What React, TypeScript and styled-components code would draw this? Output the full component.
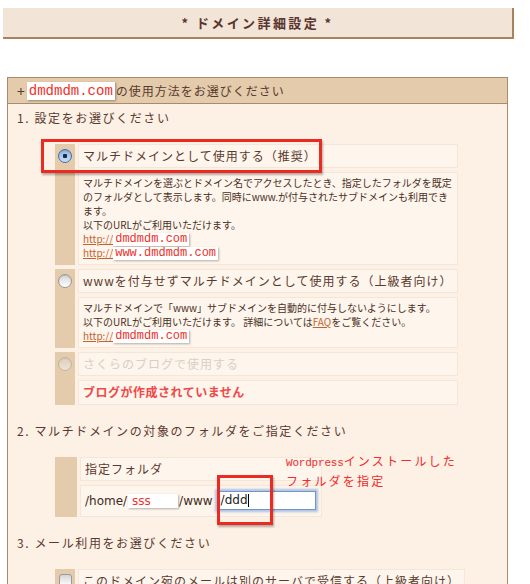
import styled, { createGlobalStyle } from "styled-components";

const GlobalStyle = createGlobalStyle`
  * { box-sizing: border-box; }
  body {
    margin: 0;
    background: #fff;
    font-family: "Noto Sans CJK JP", sans-serif;
    color: #5a3a2e;
  }
`;

const Page = styled.div`
  padding: 8px 0 0 3px;
  width: 530px;
  height: 584px;
  overflow: hidden;
`;

const TitleBar = styled.div`
  width: 511px;
  height: 31px;
  background: #f2e4d6;
  border-right: 2px solid #a8835f;
  border-bottom: 2px solid #a8835f;
  display: flex;
  align-items: center;
  justify-content: center;
  font-size: 13px;
  font-weight: 700;
  letter-spacing: 2.4px;
  color: #5a3630;
`;

const Panel = styled.div`
  position: relative;
  margin: 38px 0 0 4px;
  width: 501px;
  border: 1px solid #a88a6c;
  border-bottom: none;
  background: #fdf0e5;
  padding-bottom: 40px;
`;

const PanelHead = styled.div`
  height: 26px;
  background: #e3cbab;
  border-bottom: 1px solid #a88a6c;
  display: flex;
  align-items: center;
  padding-left: 9px;
  font-size: 12px;
  letter-spacing: 1px;
`;

const Plus = styled.span`
  font-size: 14px;
  letter-spacing: 0;
`;

const DomainTag = styled.span`
  display: inline-block;
  margin: 0 1px 0 2px;
  padding: 0 2px;
  height: 18px;
  line-height: 18px;
  background: #fff;
  color: #f0302a;
  font-family: "Liberation Mono", monospace;
  font-size: 14px;
  letter-spacing: 0;
  box-shadow: 1px 1px 2px rgba(0, 0, 0, 0.35);
`;

const SectionTitle = styled.div`
  padding: 6px 0 0 9px;
  height: 22px;
  line-height: 16px;
  font-size: 12px;
  letter-spacing: 1.6px;
`;

const Table = styled.table`
  margin: 14px 0 8px 44px;
  border-collapse: separate;
  border-spacing: 3px 4px;
`;

const TanCell = styled.td<{ $w?: number }>`
  width: ${(p) => p.$w ?? 20}px;
  background: #e3cbab;
  vertical-align: top;
  text-align: center;
  padding: 5px 0 0;
  line-height: 0;
`;

const LabelCell = styled.td<{ $disabled?: boolean; $w?: number }>`
  width: ${(p) => p.$w ?? 380}px;
  height: 24px;
  padding: 0 4px;
  border: 1px solid #f5e6d8;
  background: #fef5ec;
  font-size: 12px;
  line-height: 16px;
  letter-spacing: 1px;
  white-space: nowrap;
  overflow: hidden;
  color: ${(p) => (p.$disabled ? "#d9cfc6" : "#5a3a2e")};
`;

const DescCell = styled.td<{ $h: number }>`
  height: ${(p) => p.$h}px;
  padding: 3px 4px 4px;
  border: 1px solid #f5e6d8;
  background: #fef5ec;
  vertical-align: top;
  font-size: 10px;
  line-height: 14px;
  white-space: nowrap;
  color: #4a3026;
`;

const DescLine = styled.div`
  height: 14px;
  line-height: 14px;
`;

const Warning = styled.span`
  font-size: 12px;
  font-weight: 700;
  letter-spacing: 0.5px;
  color: #f04848;
  line-height: 16px;
`;

const Radio = styled.span<{ $checked?: boolean; $disabled?: boolean }>`
  display: inline-block;
  width: 14px;
  height: 14px;
  border-radius: 50%;
  border: 1px solid ${(p) => (p.$checked ? "#4d6e9e" : "#9a9a9a")};
  background: ${(p) =>
    p.$checked
      ? "radial-gradient(circle at 50% 50%, #1c2a3c 0 2px, transparent 2.5px), linear-gradient(#8db6ea, #c9def7)"
      : "linear-gradient(#d6d6d6, #ffffff)"};
  box-shadow: inset 0 1px 1px rgba(0, 0, 0, 0.15);
  opacity: ${(p) => (p.$disabled ? 0.45 : 1)};
`;

const Checkbox = styled.span`
  display: inline-block;
  width: 13px;
  height: 13px;
  border-radius: 3px;
  border: 1px solid #9a9a9a;
  background: linear-gradient(#d6d6d6, #ffffff);
`;

const Link = styled.span`
  color: #c4622d;
  text-decoration: underline;
`;

const UrlTag = styled.span`
  display: inline-block;
  vertical-align: top;
  height: 13px;
  margin-top: 1px;
  padding: 0 2px;
  line-height: 13px;
  background: #fff;
  color: #f0302a;
  font-family: "Liberation Mono", monospace;
  font-size: 12px;
  box-shadow: 1px 1px 2px rgba(0, 0, 0, 0.3);
`;

const FolderRow = styled.div`
  display: flex;
  align-items: center;
  height: 23px;
  gap: 1px;
  font-family: "DejaVu Sans", sans-serif;
  font-size: 12px;
  letter-spacing: 0;
  color: #3e2a22;
`;

const SmallInput = styled.span`
  display: inline-block;
  width: 50px;
  height: 14px;
  line-height: 14px;
  padding-left: 4px;
  background: #fff;
  color: #f0302a;
  font-size: 12px;
  box-shadow: 1px 1px 2px rgba(0, 0, 0, 0.3);
`;

const FocusInput = styled.span`
  display: inline-block;
  margin-left: 3px;
  width: 99px;
  height: 19px;
  line-height: 17px;
  padding-left: 3px;
  background: #fff;
  border: 1px solid #6f97cc;
  box-shadow: 0 0 2px 2px rgba(120, 160, 215, 0.6);
  color: #222;
`;

const Caret = styled.span`
  display: inline-block;
  width: 1px;
  height: 13px;
  background: #000;
  vertical-align: middle;
`;

const RedFrame = styled.div<{ $x: number; $y: number; $w: number; $h: number }>`
  position: absolute;
  left: ${(p) => p.$x}px;
  top: ${(p) => p.$y}px;
  width: ${(p) => p.$w}px;
  height: ${(p) => p.$h}px;
  border: 3px solid #ec2a22;
  box-shadow: 1px 2px 2px rgba(0, 0, 0, 0.3);
`;

const Note = styled.div`
  position: absolute;
  left: 278px;
  top: 374px;
  color: #f02c2c;
  line-height: 18px;
  font-size: 12px;
  letter-spacing: 2.2px;
`;

const NoteLatin = styled.span`
  font-family: "Liberation Mono", monospace;
  font-size: 11px;
  letter-spacing: -0.2px;
`;

type OptionProps = {
  label: string;
  checked?: boolean;
  disabled?: boolean;
  descHeight: number;
  children: React.ReactNode;
};

const Option = ({ label, checked, disabled, descHeight, children }: OptionProps) => (
  <>
    <tr>
      <TanCell rowSpan={2}>
        <Radio $checked={checked} $disabled={disabled} />
      </TanCell>
      <LabelCell $disabled={disabled}>{label}</LabelCell>
    </tr>
    <tr>
      <DescCell $h={descHeight}>{children}</DescCell>
    </tr>
  </>
);

export default function App() {
  return (
    <Page>
      <GlobalStyle />
      <TitleBar>* ドメイン詳細設定 *</TitleBar>
      <Panel>
        <PanelHead>
          <Plus>+</Plus>
          <DomainTag>dmdmdm.com</DomainTag>の使用方法をお選びください
        </PanelHead>

        <SectionTitle>1. 設定をお選びください</SectionTitle>
        <Table>
          <tbody>
            <Option label="マルチドメインとして使用する（推奨）" checked descHeight={91}>
              <DescLine>マルチドメインを選ぶとドメイン名でアクセスしたとき、指定したフォルダを既定</DescLine>
              <DescLine>のフォルダとして表示します。同時にwww.が付与されたサブドメインも利用でき</DescLine>
              <DescLine>ます。</DescLine>
              <DescLine>以下のURLがご利用いただけます。</DescLine>
              <DescLine>
                <Link>http://</Link>
                <UrlTag>dmdmdm.com</UrlTag>
              </DescLine>
              <DescLine>
                <Link>http://</Link>
                <UrlTag>www.dmdmdm.com</UrlTag>
              </DescLine>
            </Option>
            <Option label="wwwを付与せずマルチドメインとして使用する（上級者向け）" descHeight={49}>
              <DescLine>マルチドメインで「www」サブドメインを自動的に付与しないようにします。</DescLine>
              <DescLine>
                以下のURLがご利用いただけます。 詳細については<Link>FAQ</Link>をご覧ください。
              </DescLine>
              <DescLine>
                <Link>http://</Link>
                <UrlTag>dmdmdm.com</UrlTag>
              </DescLine>
            </Option>
            <Option label="さくらのブログで使用する" disabled descHeight={24}>
              <Warning>ブログが作成されていません</Warning>
            </Option>
          </tbody>
        </Table>

        <SectionTitle>2. マルチドメインの対象のフォルダをご指定ください</SectionTitle>
        <Table>
          <tbody>
            <tr>
              <TanCell rowSpan={2} $w={22} />
              <LabelCell $w={242}>指定フォルダ</LabelCell>
            </tr>
            <tr>
              <DescCell $h={31}>
                <FolderRow>
                  /home/<SmallInput>sss</SmallInput>/www
                  <FocusInput>
                    /ddd<Caret />
                  </FocusInput>
                </FolderRow>
              </DescCell>
            </tr>
          </tbody>
        </Table>

        <SectionTitle>3. メール利用をお選びください</SectionTitle>
        <Table>
          <tbody>
            <tr>
              <TanCell>
                <Checkbox />
              </TanCell>
              <LabelCell>このドメイン宛のメールは別のサーバで受信する（上級者向け）</LabelCell>
            </tr>
          </tbody>
        </Table>

        <RedFrame $x={33} $y={61} $w={281} $h={34} />
        <RedFrame $x={209} $y={397} $w={56} $h={50} />
        <Note>
          <NoteLatin>Wordpress</NoteLatin>インストールした
          <br />
          フォルダを指定
        </Note>
      </Panel>
    </Page>
  );
}
